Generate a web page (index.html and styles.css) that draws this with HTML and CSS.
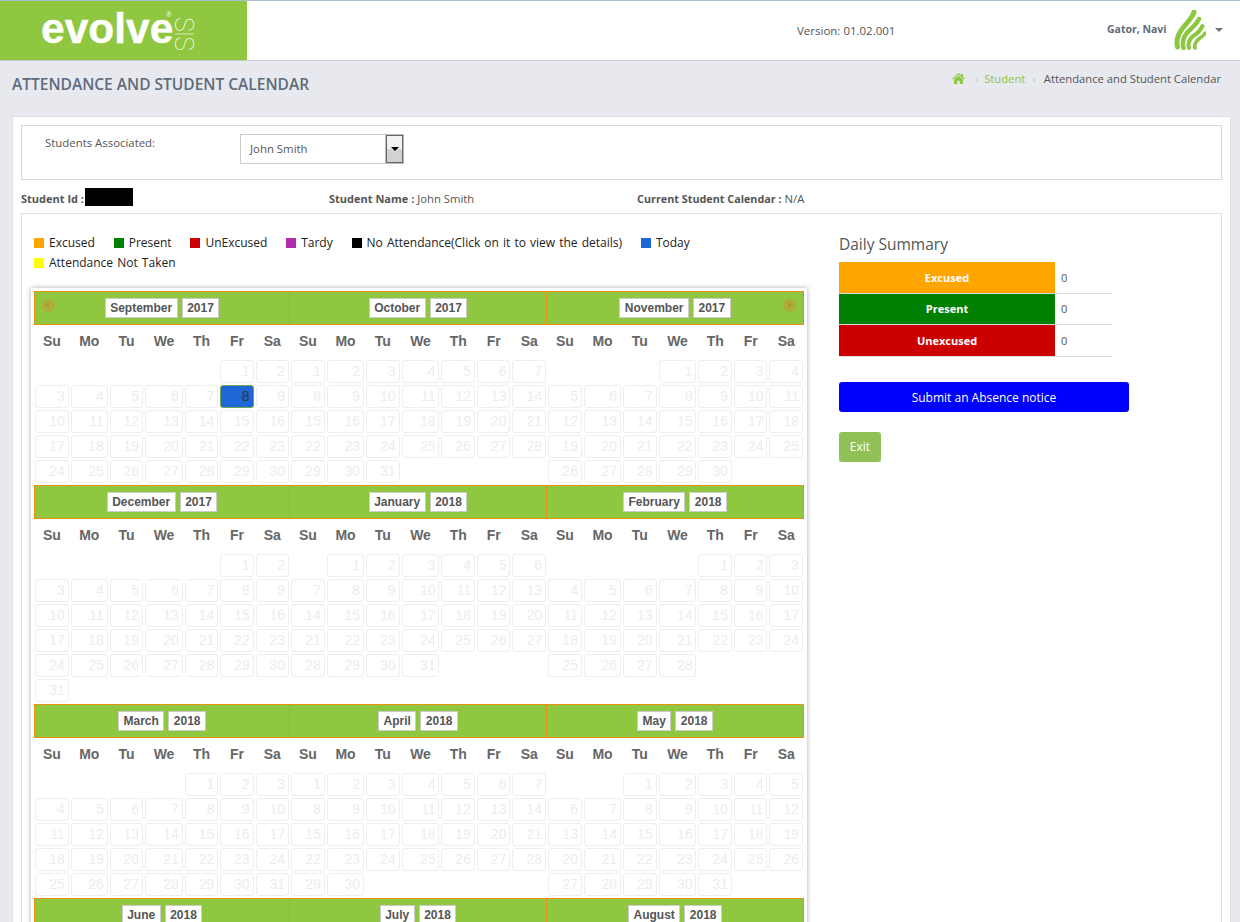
FILE: index.html
```html
<!DOCTYPE html>
<html lang="en">
<head>
<meta charset="utf-8">
<title>Attendance and Student Calendar</title>
<link rel="stylesheet" href="styles.css">
</head>
<body>
<header class="topbar">
  <div class="brand"><span class="brand-word">evolve</span><sup class="brand-reg">®</sup><span class="brand-sis">SIS</span></div>
  <div class="version">Version: 01.02.001</div>
  <div class="user">
    <span class="user-name">Gator, Navi</span>
    <svg class="leaf" viewBox="0 0 32 40" width="32" height="40" aria-hidden="true"><g fill="none" stroke="#8dc63f" stroke-linecap="round"><path stroke-width="5" d="M3.500 37C1 26 8 19 13 13C16 9 19 6 20 2"/><path stroke-width="4.500" d="M9.500 38C7 29 12 23 17 19C20 16 23 13 25 9"/><path stroke-width="4" d="M15 38C13 31 17 27 22 24C25 22 27 19 28.500 16"/><path stroke-width="3.500" d="M21 38C20 34 22 31 26 28C28 27 30 25 31 23"/></g></svg>
    <span class="caret"></span>
  </div>
</header>

<div class="titlebar">
  <h1 class="page-title">ATTENDANCE AND STUDENT CALENDAR</h1>
  <nav class="crumbs">
    <svg class="home" viewBox="0 0 13 11" width="13" height="11" aria-hidden="true"><path fill="#8fc640" d="M6.500 0L9.500 2.600V.8H11V3.900L13 5.700L12.300 6.500L6.500 1.500L.7 6.500L0 5.700ZM6.500 2.600L11 6.400V11H7.800V7.800H5.200V11H2V6.400Z"/></svg>
    <span class="sep">›</span><a class="crumb-link">Student</a><span class="sep">›</span><span class="crumb-current">Attendance and Student Calendar</span>
  </nav>
</div>

<main class="card">
  <section class="assoc">
    <label class="assoc-label">Students Associated:</label>
    <div class="select"><span class="select-text">John Smith</span><span class="select-btn"><i class="select-arrow"></i></span></div>
  </section>

  <section class="info">
    <div class="info-id"><b>Student Id :</b><span class="redact"></span></div>
    <div class="info-name"><b>Student Name :</b> John Smith</div>
    <div class="info-cal"><b>Current Student Calendar :</b> N/A</div>
  </section>

  <section class="panel">
    <div class="left">
      <ul class="legend">
        <li><i class="sw orange"></i>Excused</li>
        <li><i class="sw green"></i>Present</li>
        <li><i class="sw red"></i>UnExcused</li>
        <li><i class="sw purple"></i>Tardy</li>
        <li><i class="sw black"></i>No Attendance(Click on it to view the details)</li>
        <li><i class="sw blue"></i>Today</li>
        <li><i class="sw yellow"></i>Attendance Not Taken</li>
      </ul>

      <div class="calendar">
        <div class="cal-row">
          <div class="month">
            <div class="mhead first"><span class="nav prev"></span><span class="pick">September</span><span class="pick">2017</span></div>
            <table class="days"><thead><tr><th>Su</th><th>Mo</th><th>Tu</th><th>We</th><th>Th</th><th>Fr</th><th>Sa</th></tr></thead><tbody>
              <tr><td></td><td></td><td></td><td></td><td></td><td><a>1</a></td><td><a>2</a></td></tr>
              <tr><td><a>3</a></td><td><a>4</a></td><td><a>5</a></td><td><a>6</a></td><td><a>7</a></td><td><a class="today">8</a></td><td><a>9</a></td></tr>
              <tr><td><a>10</a></td><td><a>11</a></td><td><a>12</a></td><td><a>13</a></td><td><a>14</a></td><td><a>15</a></td><td><a>16</a></td></tr>
              <tr><td><a>17</a></td><td><a>18</a></td><td><a>19</a></td><td><a>20</a></td><td><a>21</a></td><td><a>22</a></td><td><a>23</a></td></tr>
              <tr><td><a>24</a></td><td><a>25</a></td><td><a>26</a></td><td><a>27</a></td><td><a>28</a></td><td><a>29</a></td><td><a>30</a></td></tr>
            </tbody></table>
          </div>
          <div class="month">
            <div class="mhead"><span class="pick">October</span><span class="pick">2017</span></div>
            <table class="days"><thead><tr><th>Su</th><th>Mo</th><th>Tu</th><th>We</th><th>Th</th><th>Fr</th><th>Sa</th></tr></thead><tbody>
              <tr><td><a>1</a></td><td><a>2</a></td><td><a>3</a></td><td><a>4</a></td><td><a>5</a></td><td><a>6</a></td><td><a>7</a></td></tr>
              <tr><td><a>8</a></td><td><a>9</a></td><td><a>10</a></td><td><a>11</a></td><td><a>12</a></td><td><a>13</a></td><td><a>14</a></td></tr>
              <tr><td><a>15</a></td><td><a>16</a></td><td><a>17</a></td><td><a>18</a></td><td><a>19</a></td><td><a>20</a></td><td><a>21</a></td></tr>
              <tr><td><a>22</a></td><td><a>23</a></td><td><a>24</a></td><td><a>25</a></td><td><a>26</a></td><td><a>27</a></td><td><a>28</a></td></tr>
              <tr><td><a>29</a></td><td><a>30</a></td><td><a>31</a></td><td></td><td></td><td></td><td></td></tr>
            </tbody></table>
          </div>
          <div class="month">
            <div class="mhead"><span class="pick">November</span><span class="pick">2017</span><span class="nav next"></span></div>
            <table class="days"><thead><tr><th>Su</th><th>Mo</th><th>Tu</th><th>We</th><th>Th</th><th>Fr</th><th>Sa</th></tr></thead><tbody>
              <tr><td></td><td></td><td></td><td><a>1</a></td><td><a>2</a></td><td><a>3</a></td><td><a>4</a></td></tr>
              <tr><td><a>5</a></td><td><a>6</a></td><td><a>7</a></td><td><a>8</a></td><td><a>9</a></td><td><a>10</a></td><td><a>11</a></td></tr>
              <tr><td><a>12</a></td><td><a>13</a></td><td><a>14</a></td><td><a>15</a></td><td><a>16</a></td><td><a>17</a></td><td><a>18</a></td></tr>
              <tr><td><a>19</a></td><td><a>20</a></td><td><a>21</a></td><td><a>22</a></td><td><a>23</a></td><td><a>24</a></td><td><a>25</a></td></tr>
              <tr><td><a>26</a></td><td><a>27</a></td><td><a>28</a></td><td><a>29</a></td><td><a>30</a></td><td></td><td></td></tr>
            </tbody></table>
          </div>
        </div>

        <div class="cal-row">
          <div class="month">
            <div class="mhead first"><span class="pick">December</span><span class="pick">2017</span></div>
            <table class="days"><thead><tr><th>Su</th><th>Mo</th><th>Tu</th><th>We</th><th>Th</th><th>Fr</th><th>Sa</th></tr></thead><tbody>
              <tr><td></td><td></td><td></td><td></td><td></td><td><a>1</a></td><td><a>2</a></td></tr>
              <tr><td><a>3</a></td><td><a>4</a></td><td><a>5</a></td><td><a>6</a></td><td><a>7</a></td><td><a>8</a></td><td><a>9</a></td></tr>
              <tr><td><a>10</a></td><td><a>11</a></td><td><a>12</a></td><td><a>13</a></td><td><a>14</a></td><td><a>15</a></td><td><a>16</a></td></tr>
              <tr><td><a>17</a></td><td><a>18</a></td><td><a>19</a></td><td><a>20</a></td><td><a>21</a></td><td><a>22</a></td><td><a>23</a></td></tr>
              <tr><td><a>24</a></td><td><a>25</a></td><td><a>26</a></td><td><a>27</a></td><td><a>28</a></td><td><a>29</a></td><td><a>30</a></td></tr>
              <tr><td><a>31</a></td><td></td><td></td><td></td><td></td><td></td><td></td></tr>
            </tbody></table>
          </div>
          <div class="month">
            <div class="mhead"><span class="pick">January</span><span class="pick">2018</span></div>
            <table class="days"><thead><tr><th>Su</th><th>Mo</th><th>Tu</th><th>We</th><th>Th</th><th>Fr</th><th>Sa</th></tr></thead><tbody>
              <tr><td></td><td><a>1</a></td><td><a>2</a></td><td><a>3</a></td><td><a>4</a></td><td><a>5</a></td><td><a>6</a></td></tr>
              <tr><td><a>7</a></td><td><a>8</a></td><td><a>9</a></td><td><a>10</a></td><td><a>11</a></td><td><a>12</a></td><td><a>13</a></td></tr>
              <tr><td><a>14</a></td><td><a>15</a></td><td><a>16</a></td><td><a>17</a></td><td><a>18</a></td><td><a>19</a></td><td><a>20</a></td></tr>
              <tr><td><a>21</a></td><td><a>22</a></td><td><a>23</a></td><td><a>24</a></td><td><a>25</a></td><td><a>26</a></td><td><a>27</a></td></tr>
              <tr><td><a>28</a></td><td><a>29</a></td><td><a>30</a></td><td><a>31</a></td><td></td><td></td><td></td></tr>
            </tbody></table>
          </div>
          <div class="month">
            <div class="mhead"><span class="pick">February</span><span class="pick">2018</span></div>
            <table class="days"><thead><tr><th>Su</th><th>Mo</th><th>Tu</th><th>We</th><th>Th</th><th>Fr</th><th>Sa</th></tr></thead><tbody>
              <tr><td></td><td></td><td></td><td></td><td><a>1</a></td><td><a>2</a></td><td><a>3</a></td></tr>
              <tr><td><a>4</a></td><td><a>5</a></td><td><a>6</a></td><td><a>7</a></td><td><a>8</a></td><td><a>9</a></td><td><a>10</a></td></tr>
              <tr><td><a>11</a></td><td><a>12</a></td><td><a>13</a></td><td><a>14</a></td><td><a>15</a></td><td><a>16</a></td><td><a>17</a></td></tr>
              <tr><td><a>18</a></td><td><a>19</a></td><td><a>20</a></td><td><a>21</a></td><td><a>22</a></td><td><a>23</a></td><td><a>24</a></td></tr>
              <tr><td><a>25</a></td><td><a>26</a></td><td><a>27</a></td><td><a>28</a></td><td></td><td></td><td></td></tr>
            </tbody></table>
          </div>
        </div>

        <div class="cal-row">
          <div class="month">
            <div class="mhead first"><span class="pick">March</span><span class="pick">2018</span></div>
            <table class="days"><thead><tr><th>Su</th><th>Mo</th><th>Tu</th><th>We</th><th>Th</th><th>Fr</th><th>Sa</th></tr></thead><tbody>
              <tr><td></td><td></td><td></td><td></td><td><a>1</a></td><td><a>2</a></td><td><a>3</a></td></tr>
              <tr><td><a>4</a></td><td><a>5</a></td><td><a>6</a></td><td><a>7</a></td><td><a>8</a></td><td><a>9</a></td><td><a>10</a></td></tr>
              <tr><td><a>11</a></td><td><a>12</a></td><td><a>13</a></td><td><a>14</a></td><td><a>15</a></td><td><a>16</a></td><td><a>17</a></td></tr>
              <tr><td><a>18</a></td><td><a>19</a></td><td><a>20</a></td><td><a>21</a></td><td><a>22</a></td><td><a>23</a></td><td><a>24</a></td></tr>
              <tr><td><a>25</a></td><td><a>26</a></td><td><a>27</a></td><td><a>28</a></td><td><a>29</a></td><td><a>30</a></td><td><a>31</a></td></tr>
            </tbody></table>
          </div>
          <div class="month">
            <div class="mhead"><span class="pick">April</span><span class="pick">2018</span></div>
            <table class="days"><thead><tr><th>Su</th><th>Mo</th><th>Tu</th><th>We</th><th>Th</th><th>Fr</th><th>Sa</th></tr></thead><tbody>
              <tr><td><a>1</a></td><td><a>2</a></td><td><a>3</a></td><td><a>4</a></td><td><a>5</a></td><td><a>6</a></td><td><a>7</a></td></tr>
              <tr><td><a>8</a></td><td><a>9</a></td><td><a>10</a></td><td><a>11</a></td><td><a>12</a></td><td><a>13</a></td><td><a>14</a></td></tr>
              <tr><td><a>15</a></td><td><a>16</a></td><td><a>17</a></td><td><a>18</a></td><td><a>19</a></td><td><a>20</a></td><td><a>21</a></td></tr>
              <tr><td><a>22</a></td><td><a>23</a></td><td><a>24</a></td><td><a>25</a></td><td><a>26</a></td><td><a>27</a></td><td><a>28</a></td></tr>
              <tr><td><a>29</a></td><td><a>30</a></td><td></td><td></td><td></td><td></td><td></td></tr>
            </tbody></table>
          </div>
          <div class="month">
            <div class="mhead"><span class="pick">May</span><span class="pick">2018</span></div>
            <table class="days"><thead><tr><th>Su</th><th>Mo</th><th>Tu</th><th>We</th><th>Th</th><th>Fr</th><th>Sa</th></tr></thead><tbody>
              <tr><td></td><td></td><td><a>1</a></td><td><a>2</a></td><td><a>3</a></td><td><a>4</a></td><td><a>5</a></td></tr>
              <tr><td><a>6</a></td><td><a>7</a></td><td><a>8</a></td><td><a>9</a></td><td><a>10</a></td><td><a>11</a></td><td><a>12</a></td></tr>
              <tr><td><a>13</a></td><td><a>14</a></td><td><a>15</a></td><td><a>16</a></td><td><a>17</a></td><td><a>18</a></td><td><a>19</a></td></tr>
              <tr><td><a>20</a></td><td><a>21</a></td><td><a>22</a></td><td><a>23</a></td><td><a>24</a></td><td><a>25</a></td><td><a>26</a></td></tr>
              <tr><td><a>27</a></td><td><a>28</a></td><td><a>29</a></td><td><a>30</a></td><td><a>31</a></td><td></td><td></td></tr>
            </tbody></table>
          </div>
        </div>

        <div class="cal-row">
          <div class="month"><div class="mhead first"><span class="pick">June</span><span class="pick">2018</span></div></div>
          <div class="month"><div class="mhead"><span class="pick">July</span><span class="pick">2018</span></div></div>
          <div class="month"><div class="mhead"><span class="pick">August</span><span class="pick">2018</span></div></div>
        </div>
      </div>
    </div>

    <aside class="right">
      <h2 class="sum-title">Daily Summary</h2>
      <table class="summary">
        <tr><th class="s-orange">Excused</th><td>0</td></tr>
        <tr><th class="s-green">Present</th><td>0</td></tr>
        <tr><th class="s-red">Unexcused</th><td>0</td></tr>
      </table>
      <button class="btn-submit" type="button">Submit an Absence notice</button>
      <button class="btn-exit" type="button">Exit</button>
    </aside>
  </section>
</main>
</body>
</html>
```

FILE: styles.css
```css
* { box-sizing: border-box; }
html, body { margin: 0; height: 922px; overflow: hidden; }
body { background: #e7e9ee; font-family: "Open Sans", "Noto Sans", sans-serif; font-size: 11px; color: #555; }

.topbar { display: flex; align-items: stretch; height: 61px; background: #fff; border-top: 1px solid #a9bdd3; border-bottom: 1px solid #ccc; position: relative; }
.brand { width: 247px; background: #8fc740; color: #fff; display: flex; align-items: flex-start; padding: 3px 0 0 41px; font-family: "Liberation Sans", Arial, sans-serif; }
.brand-word { font-size: 42.500px; font-weight: 700; line-height: 50px; -webkit-text-stroke: .4px #fff; }
.brand-reg { font-size: 7px; line-height: 1; margin: 7px 0 0 -7px; width: 7px; }
.brand-sis { writing-mode: vertical-rl; font-family: "Roboto", sans-serif; font-weight: 100; font-size: 25px; line-height: 20px; margin: 13px 0 0; height: 28px; letter-spacing: -1px; }
.version { margin-left: 550px; width: 250px; padding-top: 23px; font-size: 11.500px; line-height: 14px; color: #555; }
.user { margin-left: 60px; display: flex; align-items: flex-start; padding-top: 9px; }
.user-name { font-weight: 700; font-size: 10.500px; color: #5e6a7c; line-height: 14px; margin-top: 12px; width: 67px; }
.leaf { display: block; }
.caret { width: 0; height: 0; border-left: 4px solid transparent; border-right: 4px solid transparent; border-top: 4px solid #6a7280; margin: 18px 0 0 9px; }

.titlebar { display: flex; justify-content: space-between; height: 55px; padding: 0 19px 0 12px; }
.page-title { margin: 13px 0 0; font-size: 15.500px; line-height: 20px; font-weight: 600; color: #5f6b7c; }
.crumbs { display: flex; align-items: center; height: 14px; margin-top: 10px; font-size: 11.250px; color: #555; }
.home { margin-right: 10px; }
.sep { color: #c3c7cf; margin-right: 6px; }
.crumb-link { color: #8fc640; margin-right: 7px; }
.crumb-current { color: #555; margin-left: 2px; }

.card { margin: 0 9px 0 12px; height: 900px; background: #fff; border: 1px solid #dde0e6; padding: 8px 8px 0; }
.assoc { height: 55px; border: 1px solid #d8d8d8; display: flex; align-items: flex-start; padding: 8px 0 0 23px; }
.assoc-label { width: 195px; font-size: 11.400px; line-height: 14px; color: #555; margin-top: 2px; }
.select { width: 164px; height: 30px; border: 1px solid #ccc; display: flex; justify-content: space-between; align-items: stretch; padding-left: 9px; }
.select-text { font-size: 11.400px; line-height: 28px; color: #555; }
.select-btn { width: 17px; border: 1px solid #666; outline: 1px solid #bbb; background: linear-gradient(#f4f4f4, #f0f0f0 50%, #d4d4d4 50%, #d0d0d0); display: flex; align-items: center; justify-content: center; }
.select-arrow { width: 0; height: 0; border-left: 4px solid transparent; border-right: 4px solid transparent; border-top: 4px solid #000; }

.info { display: flex; align-items: flex-start; height: 33px; padding-top: 8px; font-size: 11.300px; line-height: 18px; color: #555; }
.info b { font-weight: 700; font-size: 11px; }
.info-id { width: 308px; display: flex; }
.redact { width: 48px; height: 18px; background: #000; margin-left: 1px; }
.info-name { width: 308px; padding-top: 2px; }
.info-cal { padding-top: 2px; }
.info-cal b { font-size: 10.800px; }
.info-id b { padding-top: 2px; }

.panel { display: flex; border: 1px solid #dde0e6; height: 760px; padding-left: 8px; }
.left { width: 779px; }
.legend { list-style: none; margin: 0; padding: 19px 0 0 4px; height: 74px; display: flex; flex-wrap: wrap; column-gap: 18.800px; font-size: 12px; word-spacing: 1px; line-height: 20px; color: #222; align-content: flex-start; }
.legend li { display: flex; align-items: center; white-space: nowrap; }
.sw { width: 10px; height: 10px; margin-right: 5px; }
.orange { background: #ffa500; } .green { background: #008000; } .red { background: #cc0000; }
.purple { background: #b02cb0; } .black { background: #000; } .blue { background: #1f66d6; } .yellow { background: #ff0; }

.calendar { margin-left: 1px; width: 776px; background: #fff; box-shadow: 0 0 5px #aaa; padding: 3px 3px 0; }
.cal-row { display: flex; width: 770px; }
.month { flex: 0 0 257px; min-width: 0; }
.month:first-child { flex-basis: 256px; }
.mhead { height: 34px; background: #8fc740; border: 1px solid #e8920f; border-left: 0; display: flex; align-items: center; justify-content: center; gap: 4px; position: relative; }
.mhead.first { border-left: 1px solid #e8920f; }
.pick { height: 20px; padding: 0 4.500px; background: #fff; border: 1px solid #ccc; font: 700 12px/18px "Liberation Sans", Arial, sans-serif; color: #555; }
.nav { position: absolute; top: 7px; width: 13px; height: 13px; border-radius: 50%; background: #aead38; }
.nav.prev { left: 7px; }
.nav.next { right: 7px; }
.nav::after { content: ""; position: absolute; top: 3px; border-top: 3.500px solid transparent; border-bottom: 3.500px solid transparent; }
.nav.prev::after { left: 3px; border-right: 4px solid #a39a33; }
.nav.next::after { left: 5px; border-left: 4px solid #a39a33; }

.days { width: 100%; border-collapse: collapse; margin-bottom: 1px; font-family: "Liberation Sans", Arial, sans-serif; }
.days th { padding: 8px 4px 10px; font-size: 14px; line-height: 16px; font-weight: 700; color: #666; text-align: center; }
.days td { padding: 1px; height: 25px; }
.days a { display: block; height: 23px; border: 1px solid #eee; border-radius: 3px; padding: 3px; text-align: right; font-size: 14px; line-height: 15px; color: #ebedf1; }
.days a.today { background: #1f66d6; border-color: #6fa84f; color: #333; }

.right { margin-left: 30px; width: 290px; }
.sum-title { margin: 20px 0 8px; font-size: 15.500px; line-height: 20px; font-weight: 400; color: #555; }
.summary { width: 273px; border-collapse: collapse; margin-bottom: 25px; }
.summary th { width: 216px; height: 31px; padding: 0; text-align: center; color: #fff; font-size: 11px; font-weight: 700; border-bottom: 1px solid #ddd; }
.summary td { height: 31px; padding: 0 0 0 6px; font-size: 11px; color: #555; border-bottom: 1px solid #ddd; }
.summary tr:last-child th, .summary tr:last-child td { height: 32px; }
.s-orange { background: #ffa500; } .s-green { background: #008000; } .s-red { background: #cc0000; }
.btn-submit { display: block; width: 290px; height: 30px; margin-bottom: 20px; padding: 1px 0 0; background: #00f; color: #fff; border: 0; border-radius: 3px; font: 12px "Open Sans", sans-serif; }
.btn-exit { display: block; width: 42px; height: 30px; padding: 0; background: #8fc156; color: #fff; border: 0; border-radius: 3px; font: 12px "Open Sans", sans-serif; }
```
